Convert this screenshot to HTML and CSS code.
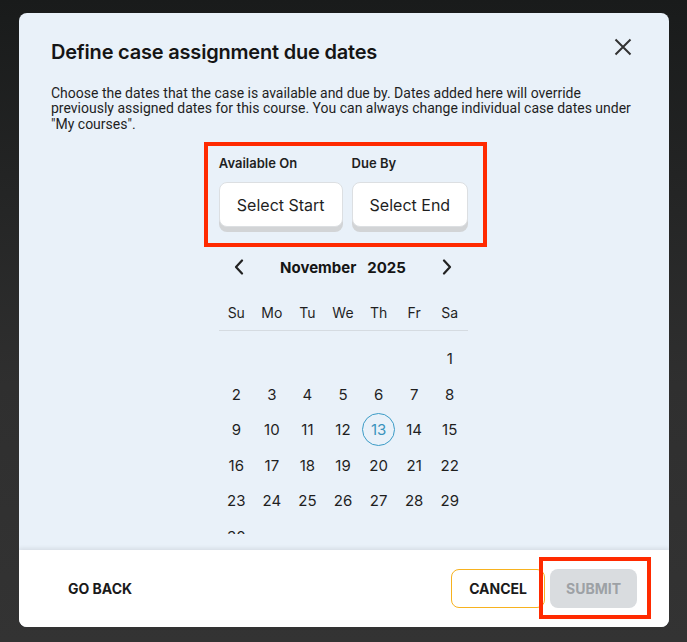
FILE: index.html
```html
<!DOCTYPE html>
<html lang="en">
<head>
<meta charset="utf-8">
<title>Define case assignment due dates</title>
<link rel="stylesheet" href="styles.css">
</head>
<body>
<div class="modal">
  <div class="modal-body">
    <div class="modal-head">
      <h1 class="title">Define case assignment due dates</h1>
      <button class="close" aria-label="Close">
        <svg width="18" height="18" viewBox="0 0 18 18"><path d="M1.5 1.5 L16.5 16.5 M16.5 1.5 L1.5 16.5" stroke="#333" stroke-width="2" fill="none"/></svg>
      </button>
    </div>
    <p class="intro">Choose the dates that the case is available and due by. Dates added here will override previously assigned dates for this course. You can always change individual case dates under "My courses".</p>

    <div class="range-box">
      <div class="range-col">
        <div class="range-label">Available On</div>
        <button class="range-btn">Select Start</button>
      </div>
      <div class="range-col">
        <div class="range-label">Due By</div>
        <button class="range-btn">Select End</button>
      </div>
    </div>

    <div class="calendar">
      <div class="cal-head">
        <button class="cal-nav" aria-label="Previous month">
          <svg width="10" height="16" viewBox="0 0 10 16"><path d="M8 1.5 L2 8 L8 14.5" stroke="#222" stroke-width="2.2" fill="none" stroke-linecap="round" stroke-linejoin="round"/></svg>
        </button>
        <div class="cal-title"><span>November</span><span>2025</span></div>
        <button class="cal-nav" aria-label="Next month">
          <svg width="10" height="16" viewBox="0 0 10 16"><path d="M2 1.5 L8 8 L2 14.5" stroke="#222" stroke-width="2.2" fill="none" stroke-linecap="round" stroke-linejoin="round"/></svg>
        </button>
      </div>
      <div class="cal-weekdays">
        <span>Su</span><span>Mo</span><span>Tu</span><span>We</span><span>Th</span><span>Fr</span><span>Sa</span>
      </div>
      <div class="cal-days">
        <span></span><span></span><span></span><span></span><span></span><span></span><span>1</span>
        <span>2</span><span>3</span><span>4</span><span>5</span><span>6</span><span>7</span><span>8</span>
        <span>9</span><span>10</span><span>11</span><span>12</span><span class="today"><i>13</i></span><span>14</span><span>15</span>
        <span>16</span><span>17</span><span>18</span><span>19</span><span>20</span><span>21</span><span>22</span>
        <span>23</span><span>24</span><span>25</span><span>26</span><span>27</span><span>28</span><span>29</span>
        <span>30</span><span></span><span></span><span></span><span></span><span></span><span></span>
      </div>
    </div>
  </div>

  <div class="modal-foot">
    <button class="btn-text">GO BACK</button>
    <div class="foot-actions">
      <button class="btn-cancel">CANCEL</button>
      <div class="submit-wrap">
        <button class="btn-submit" disabled>SUBMIT</button>
      </div>
    </div>
  </div>
</div>
</body>
</html>
```

FILE: styles.css
```css
* { box-sizing: border-box; }

html, body {
  margin: 0;
  padding: 0;
}

body {
  width: 687px;
  height: 642px;
  padding: 13px 0 0 19px;
  overflow: hidden;
  background: linear-gradient(180deg, #191b1b 0%, #242525 30%, #2f2f2f 60%, #333333 100%);
  font-family: "Inter", "Roboto", sans-serif;
  color: #1f1f1f;
}

button {
  font-family: inherit;
  cursor: pointer;
}

.modal {
  width: 650px;
  height: 614px;
  border-radius: 8px;
  background: #e9f1f9;
  overflow: hidden;
  display: flex;
  flex-direction: column;
}

.modal-body {
  flex: 1;
  padding: 20px 32px 0 32px;
  display: flex;
  flex-direction: column;
  min-height: 0;
}

.modal-head {
  display: flex;
  justify-content: space-between;
  align-items: flex-start;
}

.title {
  margin: 5px 0 0 0;
  font-size: 20px;
  line-height: 28px;
  font-weight: 600;
  letter-spacing: -0.2px;
  color: #151515;
}

.close {
  width: 28px;
  height: 28px;
  padding: 0;
  border: 0;
  background: transparent;
  display: flex;
  align-items: center;
  justify-content: center;
}

.intro {
  margin: 19.5px 0 0 0;
  font-family: "Roboto", sans-serif;
  font-size: 14px;
  line-height: 15.5px;
  color: #1f1f1f;
}

.range-box {
  align-self: center;
  margin-top: 10px;
  margin-left: 3px;
  border: 4px solid #ff2a00;
  padding: 9px 15px 11px 11px;
  display: flex;
  gap: 9px;
}

.range-col {
  display: flex;
  flex-direction: column;
  gap: 11px;
}

.range-label {
  font-size: 13px;
  line-height: 16px;
  font-weight: 600;
  color: #1f1f1f;
}

.range-btn {
  height: 45px;
  padding: 0 17px;
  border: 1px solid #dcdfe2;
  border-radius: 8px;
  background: #ffffff;
  box-shadow: 0 5px 0 #d2d4d6;
  font-size: 16px;
  color: #1f1f1f;
  margin-bottom: 5px;
}

.calendar {
  align-self: center;
  width: 249px;
  margin-top: 2px;
  margin-left: -2px;
}

.cal-head {
  height: 36px;
  padding: 0 8px;
  display: flex;
  align-items: center;
  justify-content: space-between;
}

.cal-nav {
  width: 24px;
  height: 24px;
  padding: 0;
  border: 0;
  background: transparent;
  display: flex;
  align-items: center;
  justify-content: center;
}

.cal-title {
  display: flex;
  gap: 11px;
  font-size: 15px;
  font-weight: 700;
  color: #151515;
}

.cal-weekdays {
  margin-top: 9px;
  height: 37px;
  border-bottom: 1px solid #d5dbe1;
  display: grid;
  grid-template-columns: repeat(7, 1fr);
  align-items: center;
  font-size: 14px;
  color: #1f1f1f;
}

.cal-weekdays span,
.cal-days span {
  text-align: center;
}

.cal-days {
  padding-top: 10px;
  height: 203px;
  overflow: hidden;
  display: grid;
  grid-template-columns: repeat(7, 1fr);
  grid-auto-rows: 35.5px;
  font-size: 15px;
  color: #1f1f1f;
}

.cal-days span {
  display: flex;
  align-items: center;
  justify-content: center;
}

.today i {
  font-style: normal;
  width: 33px;
  height: 33px;
  border-radius: 50%;
  border: 1px solid #3b9bc6;
  color: #3b93bd;
  display: flex;
  align-items: center;
  justify-content: center;
}

.modal-foot {
  height: 77px;
  flex: none;
  background: #ffffff;
  box-shadow: 0 -2px 4px rgba(0, 0, 0, 0.08);
  padding: 0 32px;
  display: flex;
  align-items: center;
  position: relative;
}

.btn-text {
  border: 0;
  background: transparent;
  padding: 0 17px;
  height: 39px;
  font-size: 14px;
  font-weight: 700;
  color: #1a1a1a;
}

.foot-actions {
  margin-left: auto;
  display: flex;
  gap: 5px;
}

.btn-cancel {
  height: 39px;
  padding: 0 17px;
  border: 1px solid #f7b21f;
  border-radius: 8px;
  background: #ffffff;
  font-size: 14px;
  font-weight: 700;
  color: #1a1a1a;
}

.submit-wrap {
  position: relative;
}

.submit-wrap::after {
  content: "";
  position: absolute;
  top: -12px;
  left: -11px;
  right: -14px;
  bottom: -11px;
  border: 4px solid #ff2a00;
  pointer-events: none;
}

.btn-submit {
  height: 39px;
  padding: 0 16px;
  border: 0;
  border-radius: 8px;
  background: #d9dcdf;
  font-size: 14px;
  font-weight: 700;
  color: #9da1a5;
  cursor: default;
}
```
